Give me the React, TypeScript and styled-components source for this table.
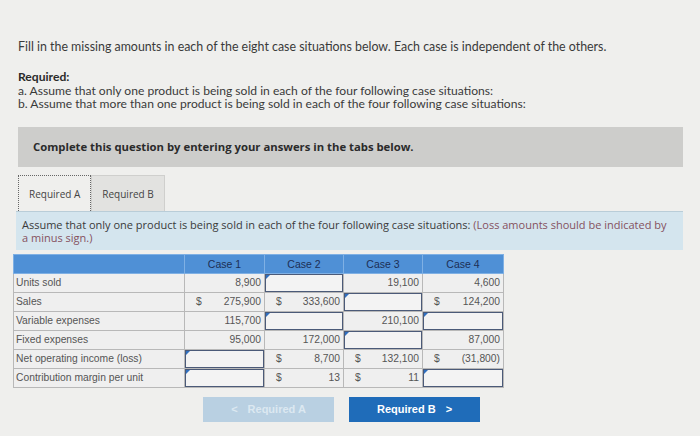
import React from 'react';
import styled, { createGlobalStyle } from 'styled-components';

const GlobalStyle = createGlobalStyle`
    html, body {
        margin: 0;
        padding: 0;
        background: #efefed;
    }
    body {
        width: 700px;
        height: 436px;
        overflow: hidden;
        font-family: Lato, "Open Sans", sans-serif;
        color: #3a3a3a;
    }
`;

const StyledPage = styled.div`
    padding: 40px 17px 0 16px;
`;

const Intro = styled.p`
    margin: 0 0 0 2px;
    font-size: 12.4px;
    line-height: 14px;
`;

const RequiredBlock = styled.div`
    margin: 16px 0 0 2px;
    font-size: 12.1px;
    line-height: 13.5px;
    b {
        font-weight: 700;
        color: #2a2a2a;
    }
`;

const Banner = styled.div`
    margin: 16px 0 0 2px;
    height: 40px;
    background: #cdcdcb;
    display: flex;
    align-items: center;
    padding-left: 15px;
    font-family: "Open Sans", sans-serif;
    font-weight: 700;
    font-size: 11.3px;
    color: #2b2b2b;
`;

const Tabs = styled.div`
    display: flex;
    margin: 8px 0 0 2px;
    height: 36px;
`;

const Tab = styled.div<{ $active?: boolean }>`
    display: flex;
    align-items: center;
    padding: 2px 10px 0;
    font-family: "Open Sans", sans-serif;
    font-size: 10px;
    color: #444;
    background: ${p => (p.$active ? '#efefed' : '#e2e2e0')};
    border: ${p => (p.$active ? '1px dotted #666' : '1px solid #cfcfcd')};
    border-bottom: none;
`;

const Panel = styled.div`
    background: #d4e5ee;
    border-top: 1px solid #b9cdd8;
    padding: 6px 10px 6px 6px;
    font-family: "Open Sans", sans-serif;
    font-size: 11px;
    line-height: 13px;
    color: #3a3a3a;
    span {
        color: #85515e;
    }
`;

const Table = styled.table`
    margin: 4px 0 0 -3px;
    border-collapse: collapse;
    font-family: "Liberation Sans", Arial, sans-serif;
    font-size: 10.3px;
    color: #555;
    td, th {
        height: 18px;
        padding: 0;
        border: 1px solid #b8b8b8;
    }
`;

const HeadCell = styled.th<{ $w: number }>`
    width: ${p => p.$w}px;
    background: #4f90d6;
    color: #1c2f55;
    font-weight: 400;
    font-size: 10.5px;
    text-align: center;
    && {
        border-color: #7fb0e4;
    }
`;

const LabelCell = styled.td`
    background: #efefef;
    padding-left: 2px !important;
    color: #555;
`;

const ValueCell = styled.td`
    background: #efefef;
    position: relative;
`;

const ValueRow = styled.div`
    display: flex;
    justify-content: space-between;
    padding: 0 3px 0 11px;
`;

const InputBox = styled.div`
    height: 16px;
    border: 1.5px solid #4b5a78;
    background: #f3f3f3;
    position: relative;
    &::before {
        content: '';
        position: absolute;
        top: 0;
        left: 0;
        border-left: 4px solid #2f6fbf;
        border-bottom: 4px solid transparent;
    }
`;

const Nav = styled.div`
    display: flex;
    gap: 15px;
    margin: 9px 0 0 187px;
`;

const NavButton = styled.div<{ $primary?: boolean }>`
    width: 131px;
    height: 25px;
    display: flex;
    align-items: center;
    justify-content: center;
    gap: 10px;
    font-family: "Liberation Sans", Arial, sans-serif;
    font-weight: 700;
    font-size: 11px;
    color: ${p => (p.$primary ? '#ffffff' : '#dce8f1')};
    background: ${p => (p.$primary ? '#1f6cb9' : '#b9d0e2')};
`;

type Cell = { dollar?: boolean; value?: string; input?: boolean };

const rows: { label: string; cells: Cell[] }[] = [
    { label: 'Units sold', cells: [{ value: '8,900' }, { input: true }, { value: '19,100' }, { value: '4,600' }] },
    { label: 'Sales', cells: [{ dollar: true, value: '275,900' }, { dollar: true, value: '333,600' }, { input: true }, { dollar: true, value: '124,200' }] },
    { label: 'Variable expenses', cells: [{ value: '115,700' }, { input: true }, { value: '210,100' }, { input: true }] },
    { label: 'Fixed expenses', cells: [{ value: '95,000' }, { value: '172,000' }, { input: true }, { value: '87,000' }] },
    { label: 'Net operating income (loss)', cells: [{ input: true }, { dollar: true, value: '8,700' }, { dollar: true, value: '132,100' }, { dollar: true, value: '(31,800)' }] },
    { label: 'Contribution margin per unit', cells: [{ input: true }, { dollar: true, value: '13' }, { dollar: true, value: '11' }, { input: true }] },
];

const widths = [170, 79, 78, 78, 80];

const App = () => {
    return <StyledPage>
        <GlobalStyle />
        <Intro>Fill in the missing amounts in each of the eight case situations below. Each case is independent of the others.</Intro>
        <RequiredBlock>
            <b>Required:</b><br />
            a. Assume that only one product is being sold in each of the four following case situations:<br />
            b. Assume that more than one product is being sold in each of the four following case situations:
        </RequiredBlock>
        <Banner>Complete this question by entering your answers in the tabs below.</Banner>
        <Tabs>
            <Tab $active>Required A</Tab>
            <Tab>Required B</Tab>
        </Tabs>
        <Panel>
            Assume that only one product is being sold in each of the four following case situations: <span>(Loss amounts should be indicated by a minus sign.)</span>
        </Panel>
        <Table>
            <thead>
                <tr>
                    <HeadCell $w={widths[0]}></HeadCell>
                    {[1, 2, 3, 4].map(n => <HeadCell key={n} $w={widths[n]}>Case {n}</HeadCell>)}
                </tr>
            </thead>
            <tbody>
                {rows.map(r => <tr key={r.label}>
                    <LabelCell>{r.label}</LabelCell>
                    {r.cells.map((c, i) => <ValueCell key={i}>
                        {c.input
                            ? <InputBox />
                            : <ValueRow><span>{c.dollar ? '$' : ''}</span><span>{c.value}</span></ValueRow>}
                    </ValueCell>)}
                </tr>)}
            </tbody>
        </Table>
        <Nav>
            <NavButton><span>&lt;</span>Required A</NavButton>
            <NavButton $primary>Required B<span>&gt;</span></NavButton>
        </Nav>
    </StyledPage>
}

export default App;
